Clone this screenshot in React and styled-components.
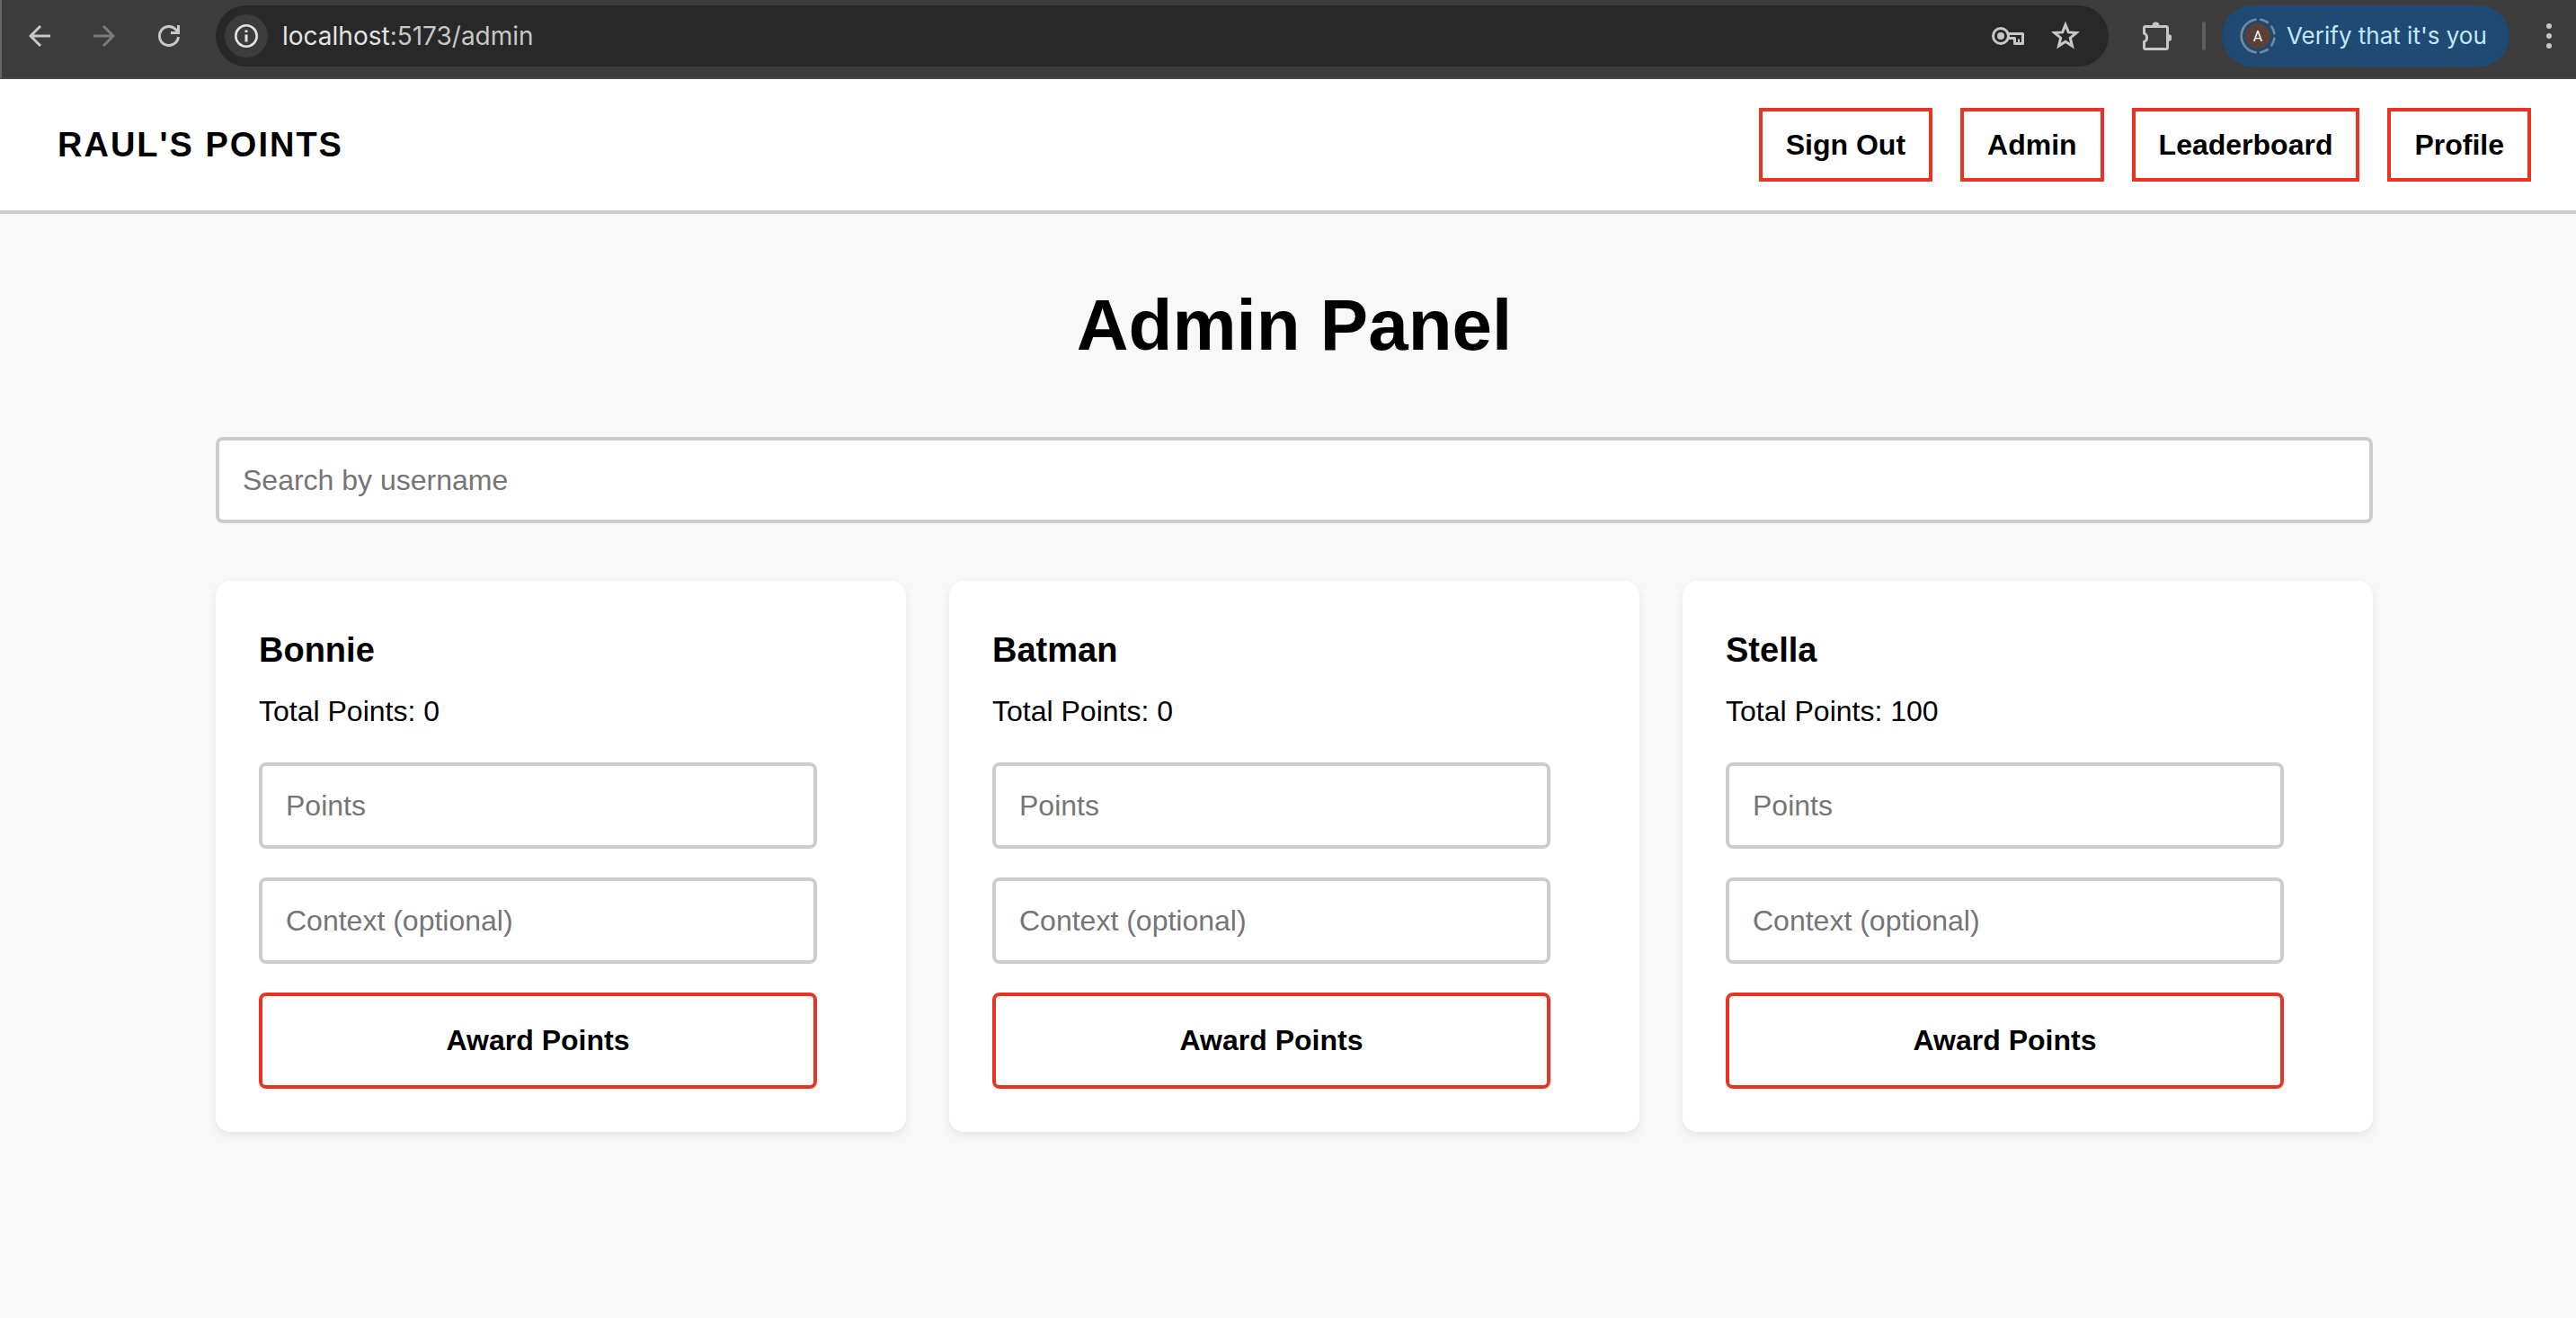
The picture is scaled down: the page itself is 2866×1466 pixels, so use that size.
import React, { useState } from "react";
import styled, { createGlobalStyle, css } from "styled-components";

const GlobalStyle = createGlobalStyle`
  *, *::before, *::after { box-sizing: border-box; }
  body {
    margin: 0;
    background: #f8f8f8;
    color: #000;
    font-family: "Liberation Sans", Helvetica, Arial, sans-serif;
    font-size: 32px;
  }
`;

/* Browser toolbar */

const Toolbar = styled.div`
  display: flex;
  align-items: center;
  height: 88px;
  padding: 6px 0 12px 6px;
  background: #3c3c3c;
  border-left: 2px solid #666;
  border-bottom: 2px solid #474747;
  font-family: Inter, Roboto, sans-serif;
`;

const IconButton = styled.button`
  display: flex;
  align-items: center;
  justify-content: center;
  flex: none;
  width: ${(p) => p.$width || 72}px;
  height: 68px;
  padding: 0;
  border: 0;
  background: none;
  color: ${(p) => (p.$dim ? "#7b7b7b" : "#c7c7c7")};
`;

const AddressBar = styled.div`
  display: flex;
  align-items: center;
  flex: 1;
  min-width: 0;
  height: 68px;
  margin: 0 18px 0 16px;
  padding: 0 14px 0 10px;
  border-radius: 34px;
  background: #282828;
`;

const SiteInfo = styled.button`
  display: flex;
  align-items: center;
  justify-content: center;
  width: 48px;
  height: 48px;
  padding: 0;
  border: 0;
  border-radius: 50%;
  background: #3c3c3c;
  color: #e3e3e3;
`;

const Url = styled.div`
  flex: 1;
  margin-left: 16px;
  font-size: 28px;
  line-height: 34px;
  color: #c7c7c7;
`;

const Host = styled.span`
  color: #e3e3e3;
`;

const Separator = styled.div`
  width: 4px;
  height: 32px;
  margin: 0 18px 0 14px;
  border-radius: 2px;
  background: #5f5f5f;
`;

const ProfileChip = styled.button`
  display: flex;
  align-items: center;
  gap: 12px;
  width: 320px;
  height: 68px;
  margin-right: 14px;
  padding: 0 0 0 20px;
  border: 0;
  border-radius: 34px;
  background: #1f4a73;
  color: #c2e7ff;
  font: 400 26px/34px Inter, Roboto, sans-serif;
  white-space: nowrap;
`;

const Icon = ({ w = 40, h = w, children }) => (
  <svg width={w} height={h} viewBox={`0 0 ${w} ${h}`} fill="none" stroke="currentColor" strokeWidth="3" aria-hidden="true">
    {children}
  </svg>
);

function BrowserToolbar() {
  return (
    <Toolbar>
      <IconButton aria-label="Back">
        <Icon w={24}><path d="M24 12H2M13 1 2 12l11 11" strokeWidth="3" /></Icon>
      </IconButton>
      <IconButton aria-label="Forward" $dim>
        <Icon w={24}><path d="M0 12h22M11 1l11 11-11 11" strokeWidth="3" /></Icon>
      </IconButton>
      <IconButton aria-label="Reload">
        <Icon w={24}>
          <path d="M22.4 13A10.5 10.5 0 1 1 19.5 4.7L22 7.500" />
          <path d="M22.500 0v8.500H14" />
        </Icon>
      </IconButton>
      <AddressBar>
        <SiteInfo aria-label="View site information">
          <Icon w={26}>
            <circle cx="13" cy="13" r="11.700" strokeWidth="2.600" />
            <path d="M13 11.500v8M13 6.500v2.600" />
          </Icon>
        </SiteInfo>
        <Url><Host>localhost</Host>:5173/admin</Url>
        <IconButton aria-label="Manage passwords" $width={60}>
          <Icon w={36} h={20}>
            <circle cx="10" cy="10" r="8.500" />
            <circle cx="10" cy="10" r="4" fill="currentColor" stroke="none" />
            <path d="M17.500 7.500H34.500V18.500H25.500V12.500H17.500" strokeLinejoin="round" />
            <path d="M30 18.500V13.500" strokeWidth="2" />
          </Icon>
        </IconButton>
        <IconButton aria-label="Bookmark this page" $width={68}>
          <Icon w={32}>
            <path d="M16 3.500l3.300 8.400 8.900.600-6.900 5.700 2.200 8.900L16 22.300l-7.500 4.800 2.200-8.900-6.900-5.700 8.900-.600z" />
          </Icon>
        </IconButton>
      </AddressBar>
      <IconButton aria-label="Extensions">
        <Icon w={32}>
          <path d="M3 5.500H26a1.500 1.500 0 0 1 1.500 1.500V29a1.500 1.500 0 0 1-1.500 1.500H3A1.500 1.500 0 0 1 1.500 29V22.500A5.200 5.200 0 0 0 1.500 13V7A1.500 1.500 0 0 1 3 5.500z" strokeWidth="3" />
          <path d="M10.500 4.500a4 4 0 0 1 8 0zM28.500 14a4 4 0 0 1 0 8z" fill="currentColor" stroke="none" />
        </Icon>
      </IconButton>
      <Separator />
      <ProfileChip>
        <svg width="40" height="40" viewBox="0 0 40 40" aria-hidden="true">
          <circle cx="20" cy="20" r="14" fill="#5b4037" />
          <g fill="none" stroke="#748a9e" strokeWidth="2.600" strokeLinecap="round">
            <path d="M17.500 1.700A18.500 18.500 0 0 0 17.500 38.300" />
            <path d="M23.200 1.800a18.500 18.500 0 0 1 7.600 3.100M35.300 9.500a18.500 18.500 0 0 1 3 7.600M38.300 22.900a18.500 18.500 0 0 1-3 7.600M30.800 35.100a18.500 18.500 0 0 1-7.600 3.100" />
          </g>
          <text x="20" y="26" textAnchor="middle" fontFamily="Roboto, sans-serif" fontSize="16" fill="#fff">A</text>
        </svg>
        Verify that it's you
      </ProfileChip>
      <IconButton aria-label="Menu" $width={60}>
        <Icon w={8} h={28}>
          <g fill="currentColor" stroke="none">
            <circle cx="4" cy="3" r="3" />
            <circle cx="4" cy="14" r="3" />
            <circle cx="4" cy="25" r="3" />
          </g>
        </Icon>
      </IconButton>
    </Toolbar>
  );
}

/* Site header */

const Header = styled.header`
  display: flex;
  align-items: center;
  justify-content: space-between;
  padding: 32px 50px 32px 64px;
  background: #fff;
  border-bottom: 4px solid #ccc;
`;

const Brand = styled.div`
  font-size: 38px;
  font-weight: 700;
  letter-spacing: 2px;
  text-transform: uppercase;
`;

const Nav = styled.nav`
  display: flex;
  gap: 31px;
`;

const navItem = css`
  height: 82px;
  padding: 0 26px;
  border: 4px solid #eb3323;
  background: #fff;
  color: #000;
  font: 700 32px/74px "Liberation Sans", Helvetica, Arial, sans-serif;
  text-decoration: none;
  cursor: pointer;
`;

const NavLink = styled.a`
  ${navItem}
`;

const NavButton = styled.button`
  ${navItem}
`;

/* Admin panel */

const Main = styled.main`
  padding: 78px 226px 64px 240px;
`;

const Title = styled.h1`
  margin: 0 0 78px;
  font-size: 80px;
  line-height: 92px;
  text-align: center;
`;

const Field = styled.input`
  display: block;
  width: 100%;
  height: 96px;
  padding: 0 26px;
  border: 4px solid #ccc;
  border-radius: 8px;
  background: #fff;
  color: #000;
  font: 32px "Liberation Sans", Helvetica, Arial, sans-serif;

  &::placeholder {
    color: #757575;
    opacity: 1;
  }
`;

const Cards = styled.div`
  display: grid;
  grid-template-columns: repeat(3, 1fr);
  gap: 48px;
  margin-top: 64px;
`;

const Card = styled.section`
  padding: 48px;
  border-radius: 16px;
  background: #fff;
  box-shadow: 0 4px 10px rgba(0, 0, 0, 0.08);
`;

const UserName = styled.h3`
  margin: 6px 0 20px;
  font-size: 38px;
  line-height: 46px;
`;

const Total = styled.p`
  margin: 0 0 32px;
  line-height: 50px;
`;

const AwardForm = styled.form`
  display: grid;
  gap: 32px;
  padding-right: 51px;
`;

const AwardButton = styled.button`
  height: 107px;
  border: 4px solid #eb3323;
  border-radius: 8px;
  background: #fff;
  color: #000;
  font: 700 32px "Liberation Sans", Helvetica, Arial, sans-serif;
  cursor: pointer;
`;

const USERS = [
  { name: "Bonnie", points: 0 },
  { name: "Batman", points: 0 },
  { name: "Stella", points: 100 },
];

function UserCard({ user }) {
  return (
    <Card>
      <UserName>{user.name}</UserName>
      <Total>Total Points: {user.points}</Total>
      <AwardForm onSubmit={(e) => e.preventDefault()}>
        <Field type="number" placeholder="Points" aria-label={`Points for ${user.name}`} />
        <Field type="text" placeholder="Context (optional)" aria-label={`Context for ${user.name}`} />
        <AwardButton type="submit">Award Points</AwardButton>
      </AwardForm>
    </Card>
  );
}

export default function App() {
  const [query, setQuery] = useState("");
  const shown = USERS.filter((u) => u.name.toLowerCase().includes(query.toLowerCase()));

  return (
    <>
      <GlobalStyle />
      <BrowserToolbar />
      <Header>
        <Brand>Raul's Points</Brand>
        <Nav>
          <NavButton type="button">Sign Out</NavButton>
          <NavLink href="#admin">Admin</NavLink>
          <NavLink href="#leaderboard">Leaderboard</NavLink>
          <NavLink href="#profile">Profile</NavLink>
        </Nav>
      </Header>
      <Main>
        <Title>Admin Panel</Title>
        <Field
          type="search"
          placeholder="Search by username"
          aria-label="Search by username"
          value={query}
          onChange={(e) => setQuery(e.target.value)}
        />
        <Cards>
          {shown.map((user) => (
            <UserCard key={user.name} user={user} />
          ))}
        </Cards>
      </Main>
    </>
  );
}
